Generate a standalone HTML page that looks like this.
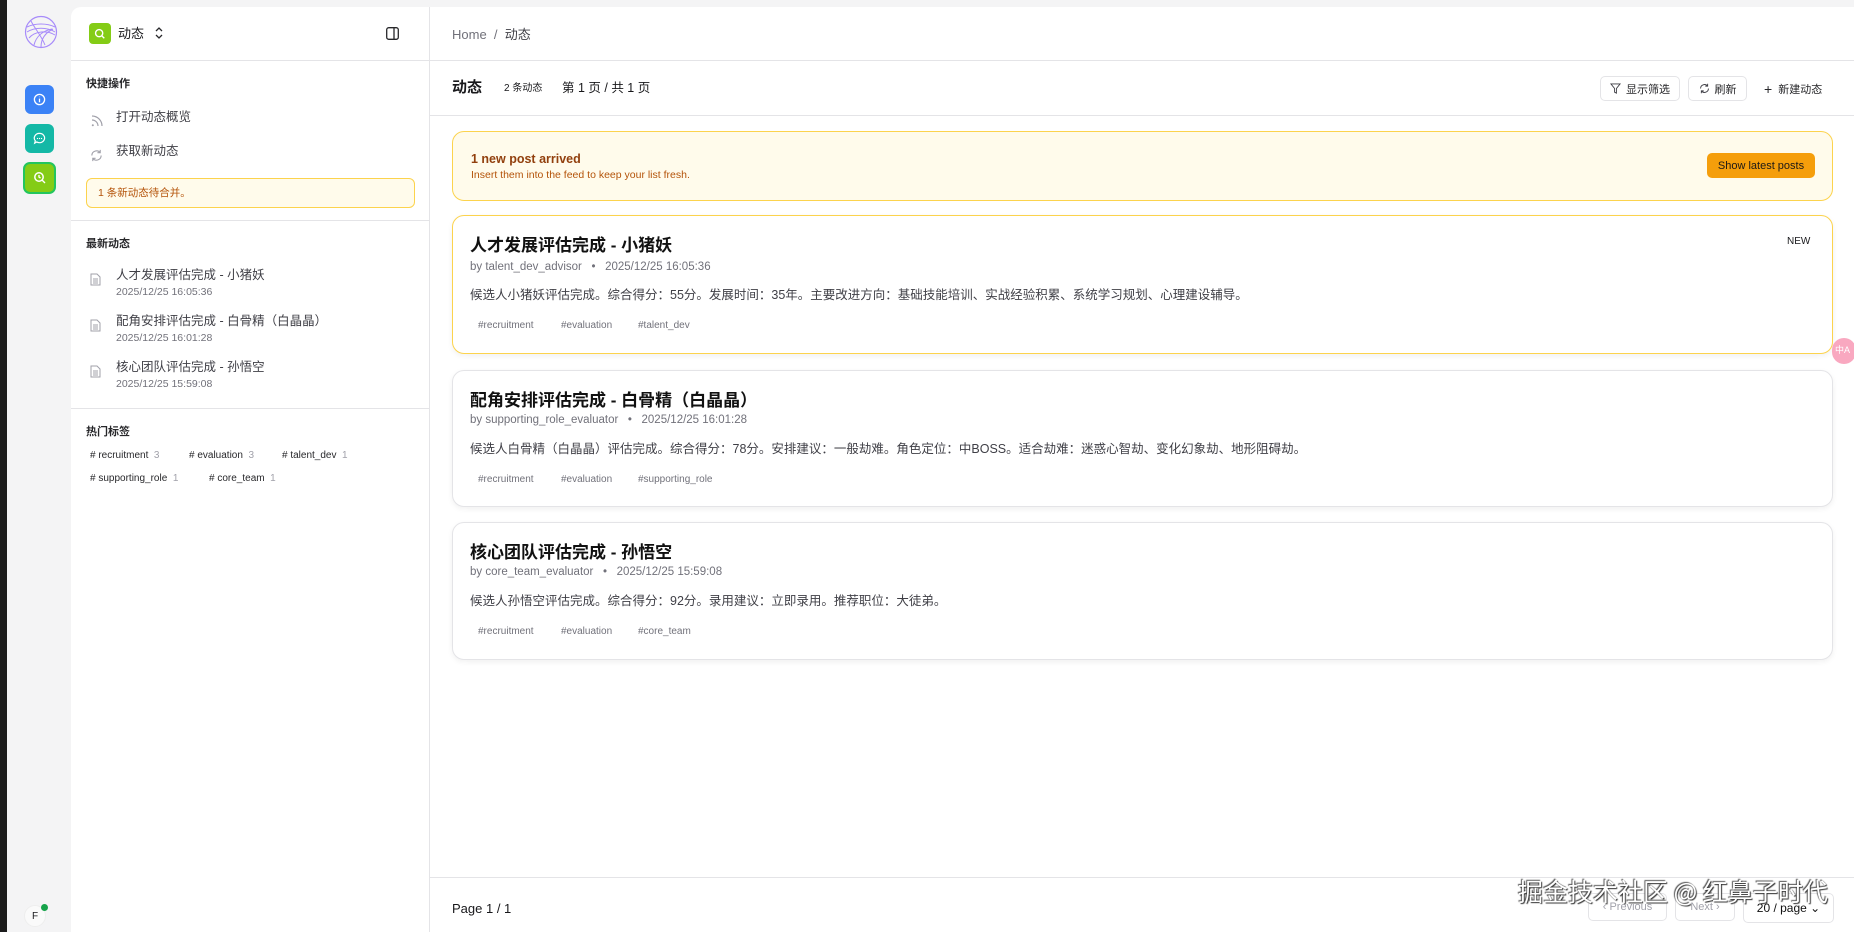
<!DOCTYPE html>
<html><head><meta charset="utf-8">
<style>
*{box-sizing:border-box;margin:0;padding:0}
body{width:1854px;height:932px;overflow:hidden;background:#f4f4f5;font-family:"Liberation Sans","Noto Sans CJK SC",sans-serif;color:#18181b;position:relative}
.abs{position:absolute}
.strip{left:0;top:0;width:7px;height:932px;background:#1c1c1c}
.rail{left:7px;top:0;width:64px;height:932px;background:#f4f4f5}
.ri{position:absolute;width:29px;height:29px;border-radius:6px;display:flex;align-items:center;justify-content:center}
.side{left:71px;top:7px;width:359px;height:925px;background:#fff;border-top-left-radius:10px;border-right:1px solid #e4e4e7}
.main{left:430px;top:7px;width:1424px;height:925px;background:#fff}
.hr{position:absolute;height:1px;background:#e4e4e7}
.t{position:absolute;white-space:nowrap;line-height:1.2}
.sec{font-size:11px;font-weight:bold;color:#27272a}
.card{position:absolute;left:452px;width:1381px;border:1px solid #e4e4e7;border-radius:12px;background:#fff;box-shadow:0 2px 6px rgba(0,0,0,.06)}
.ct{position:absolute;left:17px;font-size:17px;font-weight:bold;color:#111;line-height:1.2;white-space:nowrap}
.cm{position:absolute;left:17px;font-size:11.5px;color:#71717a;line-height:1.2;white-space:nowrap}
.cb{position:absolute;left:17px;font-size:12.5px;color:#3f3f46;line-height:1.2;white-space:nowrap}
.tg{position:absolute;font-size:10px;color:#71717a;line-height:1.2;white-space:nowrap}
.btn{position:absolute;border:1px solid #e4e4e7;border-radius:5px;font-size:11px;display:flex;align-items:center;justify-content:center;gap:5px;color:#27272a}
</style></head><body>
<div class="abs strip"></div>
<div class="abs rail">
 <svg class="abs" style="left:17px;top:15px" width="34" height="34" viewBox="0 0 34 34"><circle cx="17" cy="17" r="15.5" fill="none" stroke="#a78bfa" stroke-width="1.2"/><path d="M3 12c8-4 20-4 28 0M3 17c8-5 20-5 28 0M5 23c6-7 18-8 26-3M10 30c2-8 8-14 18-16M17 32c0-8 4-14 12-18M7 6c4 8 10 14 14 24" fill="none" stroke="#a78bfa" stroke-width="1"/></svg>
 <div class="ri" style="left:18px;top:85px;background:#3b82f6"><svg width="13" height="13" viewBox="0 0 14 14"><circle cx="7" cy="7" r="5.5" fill="none" stroke="#fff" stroke-width="1.4"/><path d="M7 6v4M7 4v.5" stroke="#fff" stroke-width="1.4"/></svg></div>
 <div class="ri" style="left:18px;top:124px;background:#14b8a6"><svg width="13" height="13" viewBox="0 0 14 14"><path d="M7 1.5a5.5 5 0 1 1-3 9.2L1.8 12l.7-2.5A5.5 5 0 0 1 7 1.5z" fill="none" stroke="#fff" stroke-width="1.3"/><circle cx="4.8" cy="7" r=".7" fill="#fff"/><circle cx="7" cy="7" r=".7" fill="#fff"/><circle cx="9.2" cy="7" r=".7" fill="#fff"/></svg></div>
 <div class="ri" style="left:16px;top:162px;width:33px;height:32px;background:#84cc16;border:2px solid #22c55e;border-radius:7px"><svg width="14" height="14" viewBox="0 0 14 14"><circle cx="6" cy="6" r="4.2" fill="none" stroke="#fff" stroke-width="1.5"/><path d="M9 9l3 3M6 4v2l1.5 1" stroke="#fff" stroke-width="1.4"/></svg></div>
 <div class="abs" style="left:17px;top:905px;width:22px;height:22px;border-radius:50%;background:#fafafa;border:1px solid #eee;font-size:10px;display:flex;align-items:center;justify-content:center">F</div>
 <div class="abs" style="left:34px;top:904px;width:7px;height:7px;border-radius:50%;background:#16a34a"></div>
</div>

<div class="abs side">
 <div class="abs" style="left:18px;top:16px;width:22px;height:21px;border-radius:4px;background:#84cc16;display:flex;align-items:center;justify-content:center"><svg width="12" height="12" viewBox="0 0 14 14"><circle cx="6" cy="6" r="4.2" fill="none" stroke="#fff" stroke-width="1.6"/><path d="M9 9l3 3" stroke="#fff" stroke-width="1.6"/></svg></div>
 <div class="t" style="left:47px;top:19px;font-size:13px">动态</div>
 <svg class="abs" style="left:84px;top:20px" width="8" height="12" viewBox="0 0 8 12"><path d="M1 4l3-3 3 3M1 8l3 3 3-3" fill="none" stroke="#27272a" stroke-width="1.3"/></svg>
 <svg class="abs" style="left:315px;top:20px" width="13" height="13" viewBox="0 0 13 13"><rect x=".7" y=".7" width="11.6" height="11.6" rx="2" fill="none" stroke="#27272a" stroke-width="1.3"/><path d="M8 1v11" stroke="#27272a" stroke-width="1.3"/></svg>
 <div class="hr" style="left:0;top:53px;width:359px"></div>
 <div class="t sec" style="left:15px;top:71px">快捷操作</div>
 <svg class="abs" style="left:20px;top:108px" width="12" height="12" viewBox="0 0 12 12"><path d="M1 1a10 10 0 0 1 10 10M1 5a6 6 0 0 1 6 6" fill="none" stroke="#a1a1aa" stroke-width="1.2"/><circle cx="1.8" cy="10.2" r="1" fill="#a1a1aa"/></svg>
 <div class="t" style="left:45px;top:103px;font-size:12.5px;color:#3f3f46">打开动态概览</div>
 <svg class="abs" style="left:19px;top:142px" width="13" height="13" viewBox="0 0 14 14"><path d="M2 7a5 5 0 0 1 9-3M12 7a5 5 0 0 1-9 3M11 1v3H8M3 13v-3h3" fill="none" stroke="#a1a1aa" stroke-width="1.2"/></svg>
 <div class="t" style="left:45px;top:137px;font-size:12.5px;color:#3f3f46">获取新动态</div>
 <div class="abs" style="left:15px;top:171px;width:329px;height:30px;border:1px solid #fcd34d;background:#fffbeb;border-radius:6px;font-size:10.5px;color:#b45309;padding:8px 11px;line-height:1.2">1 条新动态待合并。</div>
 <div class="hr" style="left:0;top:213px;width:359px"></div>
 <div class="t sec" style="left:15px;top:231px">最新动态</div>
 <svg class="abs" style="left:19px;top:266px" width="11" height="13" viewBox="0 0 11 13"><path d="M1 1h6l3 3v8H1z M3 6h5M3 8h5M3 10h5" fill="none" stroke="#a1a1aa" stroke-width="1"/></svg>
 <div class="t" style="left:45px;top:261px;font-size:12.5px;color:#3f3f46">人才发展评估完成 - 小猪妖</div>
 <div class="t" style="left:45px;top:279px;font-size:10.5px;color:#71717a">2025/12/25 16:05:36</div>
 <svg class="abs" style="left:19px;top:312px" width="11" height="13" viewBox="0 0 11 13"><path d="M1 1h6l3 3v8H1z M3 6h5M3 8h5M3 10h5" fill="none" stroke="#a1a1aa" stroke-width="1"/></svg>
 <div class="t" style="left:45px;top:307px;font-size:12.5px;color:#3f3f46">配角安排评估完成 - 白骨精（白晶晶）</div>
 <div class="t" style="left:45px;top:325px;font-size:10.5px;color:#71717a">2025/12/25 16:01:28</div>
 <svg class="abs" style="left:19px;top:358px" width="11" height="13" viewBox="0 0 11 13"><path d="M1 1h6l3 3v8H1z M3 6h5M3 8h5M3 10h5" fill="none" stroke="#a1a1aa" stroke-width="1"/></svg>
 <div class="t" style="left:45px;top:353px;font-size:12.5px;color:#3f3f46">核心团队评估完成 - 孙悟空</div>
 <div class="t" style="left:45px;top:371px;font-size:10.5px;color:#71717a">2025/12/25 15:59:08</div>
 <div class="hr" style="left:0;top:401px;width:359px"></div>
 <div class="t sec" style="left:15px;top:419px">热门标签</div>
 <div class="t" style="left:19px;top:443px;font-size:10px;color:#27272a"># recruitment <span style="color:#a1a1aa">&nbsp;3</span></div>
 <div class="t" style="left:118px;top:443px;font-size:10px;color:#27272a"># evaluation <span style="color:#a1a1aa">&nbsp;3</span></div>
 <div class="t" style="left:211px;top:443px;font-size:10px;color:#27272a"># talent_dev <span style="color:#a1a1aa">&nbsp;1</span></div>
 <div class="t" style="left:19px;top:466px;font-size:10px;color:#27272a"># supporting_role <span style="color:#a1a1aa">&nbsp;1</span></div>
 <div class="t" style="left:138px;top:466px;font-size:10px;color:#27272a"># core_team <span style="color:#a1a1aa">&nbsp;1</span></div>
</div>

<div class="abs main"></div>
<div class="t" style="left:452px;top:27px;font-size:13px;color:#71717a">Home &nbsp;/&nbsp; <span style="color:#3f3f46">动态</span></div>
<div class="hr" style="left:430px;top:60px;width:1424px"></div>
<div class="t" style="left:452px;top:79px;font-size:15px;font-weight:bold">动态</div>
<div class="t" style="left:504px;top:83px;font-size:10px">2 条动态</div>
<div class="t" style="left:562px;top:81px;font-size:12.5px">第 1 页 / 共 1 页</div>
<div class="btn" style="left:1600px;top:76px;width:80px;height:25px"><svg width="11" height="11" viewBox="0 0 12 12"><path d="M1 1h10L7 6v5L5 10V6z" fill="none" stroke="#3f3f46" stroke-width="1"/></svg>显示筛选</div>
<div class="btn" style="left:1688px;top:76px;width:59px;height:25px"><svg width="11" height="11" viewBox="0 0 14 14"><path d="M2 7a5 5 0 0 1 9-3M12 7a5 5 0 0 1-9 3M11 1v3H8M3 13v-3h3" fill="none" stroke="#3f3f46" stroke-width="1.2"/></svg>刷新</div>
<div class="t" style="left:1764px;top:81px;font-size:11px;color:#27272a"><span style="font-size:14px;vertical-align:-1px">+</span>&nbsp; 新建动态</div>
<div class="hr" style="left:430px;top:115px;width:1424px"></div>

<div class="abs" style="left:452px;top:131px;width:1381px;height:70px;border:1px solid #fcd34d;background:#fffbeb;border-radius:12px">
 <div class="t" style="left:18px;top:20px;font-size:12.5px;font-weight:bold;color:#92400e">1 new post arrived</div>
 <div class="t" style="left:18px;top:37px;font-size:10.5px;color:#b45309">Insert them into the feed to keep your list fresh.</div>
 <div class="abs" style="left:1254px;top:21px;width:108px;height:25px;background:#f59e0b;border-radius:5px;font-size:11px;color:#1c1917;display:flex;align-items:center;justify-content:center">Show latest posts</div>
</div>

<div class="card" style="top:215px;height:139px;border-color:#fcd34d">
 <div class="ct" style="top:20px">人才发展评估完成 - 小猪妖</div>
 <div class="t" style="left:1334px;top:20px;font-size:10px">NEW</div>
 <div class="cm" style="top:45px">by talent_dev_advisor &nbsp; • &nbsp; 2025/12/25 16:05:36</div>
 <div class="cb" style="top:72px">候选人小猪妖评估完成。综合得分：55分。发展时间：35年。主要改进方向：基础技能培训、实战经验积累、系统学习规划、心理建设辅导。</div>
 <div class="tg" style="left:25px;top:104px">#recruitment</div><div class="tg" style="left:108px;top:104px">#evaluation</div><div class="tg" style="left:185px;top:104px">#talent_dev</div>
</div>
<div class="card" style="top:370px;height:137px">
 <div class="ct" style="top:20px">配角安排评估完成 - 白骨精（白晶晶）</div>
 <div class="cm" style="top:43px">by supporting_role_evaluator &nbsp; • &nbsp; 2025/12/25 16:01:28</div>
 <div class="cb" style="top:71px">候选人白骨精（白晶晶）评估完成。综合得分：78分。安排建议：一般劫难。角色定位：中BOSS。适合劫难：迷惑心智劫、变化幻象劫、地形阻碍劫。</div>
 <div class="tg" style="left:25px;top:103px">#recruitment</div><div class="tg" style="left:108px;top:103px">#evaluation</div><div class="tg" style="left:185px;top:103px">#supporting_role</div>
</div>
<div class="card" style="top:522px;height:138px">
 <div class="ct" style="top:20px">核心团队评估完成 - 孙悟空</div>
 <div class="cm" style="top:43px">by core_team_evaluator &nbsp; • &nbsp; 2025/12/25 15:59:08</div>
 <div class="cb" style="top:71px">候选人孙悟空评估完成。综合得分：92分。录用建议：立即录用。推荐职位：大徒弟。</div>
 <div class="tg" style="left:25px;top:103px">#recruitment</div><div class="tg" style="left:108px;top:103px">#evaluation</div><div class="tg" style="left:185px;top:103px">#core_team</div>
</div>

<div class="abs" style="left:1832px;top:338px;width:24px;height:26px;border-radius:13px;background:#f9a8c0;font-size:9px;color:#fff;padding:7px 3px;line-height:1.2">中A</div>

<div class="hr" style="left:430px;top:877px;width:1424px"></div>
<div class="t" style="left:452px;top:901px;font-size:13px">Page 1 / 1</div>
<div class="btn" style="left:1588px;top:893px;width:79px;height:28px;color:#a1a1aa">‹ Previous</div>
<div class="btn" style="left:1675px;top:893px;width:60px;height:28px;color:#a1a1aa">Next ›</div>
<div class="btn" style="left:1743px;top:893px;width:91px;height:30px;font-size:12px;color:#111">20 / page ⌄</div>
<div class="t" style="left:1518px;top:876px;font-size:25px;color:#fff;text-shadow:1px 1px 1px #333,-1px -1px 1px #555;font-family:'Noto Sans CJK SC',sans-serif">掘金技术社区 @ 红鼻子时代</div>
</body></html>
